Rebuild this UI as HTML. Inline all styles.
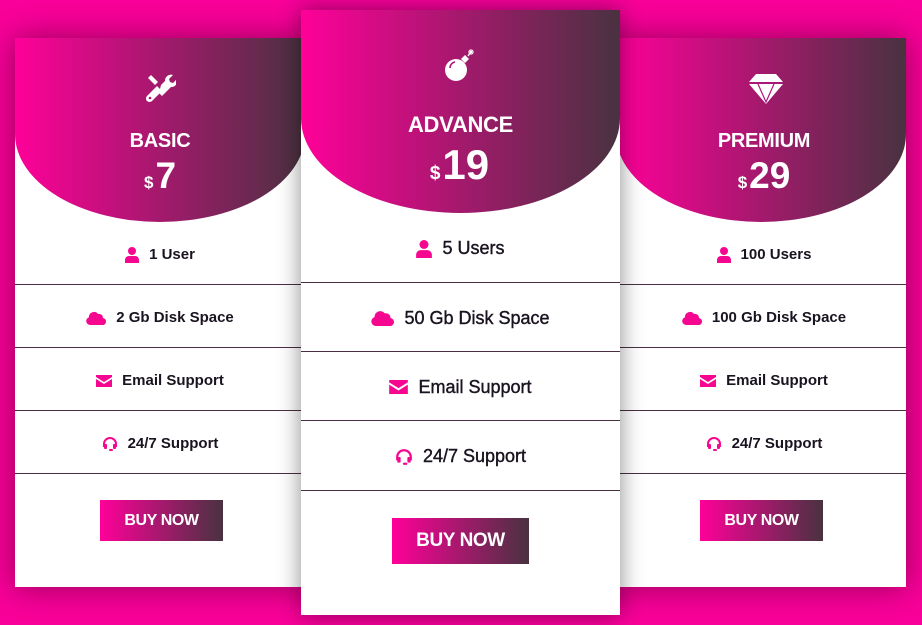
<!DOCTYPE html>
<html><head><style>
*{margin:0;padding:0;box-sizing:border-box}
body{width:922px;height:625px;background:#f9009a;position:relative;overflow:hidden;font-family:"Liberation Sans",sans-serif}
.card{position:absolute;background:#fff;box-shadow:0 0 30px rgba(80,0,40,.6)}
.hd{position:absolute;left:0;top:0;width:100%;background:linear-gradient(90deg,#ff0099,#493240);color:#fff;text-align:center}
.ttl{position:absolute;width:100%;font-weight:bold;letter-spacing:-.3px}
.pr{position:absolute;width:100%;font-weight:bold}
.pr small{font-size:17px;margin-right:2px}
.ico{position:absolute;left:50%}
.row{position:absolute;left:0;width:100%;border-bottom:1px solid #4a2f40;display:flex;align-items:center;justify-content:center;color:#1a1320;font-weight:bold}
.row svg{margin-right:10px;fill:#f5078f}
.btn{position:absolute;background:linear-gradient(90deg,#ff0099,#493240);color:#fff;font-weight:bold;display:flex;align-items:center;justify-content:center;letter-spacing:-.4px}
</style></head><body>

<!-- BASIC -->
<div class="card" style="left:15px;top:38px;width:290px;height:549px">
 <div class="hd" style="height:184px;border-radius:0 0 50% 50%/0 0 88px 88px">
  <svg class="ico" style="margin-left:-16px;top:34px" width="32" height="32" viewBox="0 0 32 32" fill="#fff"><path d="M4 6l3-3 7 7-3 3z"/><path d="M13 14l5 5-10 10a3 3 0 0 1-5-5z"/><path d="M17 13l4-4a6 6 0 0 1 8-6l-4 4 1 3 3 1 4-4a6 6 0 0 1-6 8l-9 9-3-3z"/><circle cx="6" cy="26" r="1.3" fill="#b01580"/></svg>
  <div class="ttl" style="top:92px;font-size:20px">BASIC</div>
  <div class="pr" style="top:117px;font-size:37px"><small>$</small>7</div>
 </div>
 <div class="row" style="top:184px;height:63px;padding-top:3px;font-size:15px"><svg width="14" height="16" viewBox="0 0 14 16"><circle cx="7" cy="4" r="4"/><path d="M0 16v-3a4 4 0 0 1 4-4h6a4 4 0 0 1 4 4v3z"/></svg>1 User</div>
 <div class="row" style="top:247px;height:63px;padding-top:3px;font-size:15px"><svg width="20" height="14" viewBox="0 0 20 14"><path d="M4 14a4 4 0 0 1-1-7.8A5 5 0 0 1 12 3a4 4 0 0 1 5 4 3.5 3.5 0 0 1-1 7z"/></svg>2 Gb Disk Space</div>
 <div class="row" style="top:310px;height:63px;padding-top:3px;font-size:15px"><svg width="16" height="12" viewBox="0 0 16 12"><path d="M0 0h16v2l-8 5-8-5z"/><path d="M0 4l8 5 8-5v8H0z"/></svg>Email Support</div>
 <div class="row" style="top:373px;height:63px;padding-top:3px;font-size:15px"><svg width="16" height="16" viewBox="0 0 16 16"><path d="M8 1a7 7 0 0 0-7 7v3h2V8a5 5 0 0 1 10 0v3h2V8a7 7 0 0 0-7-7z"/><rect x="2" y="8" width="3" height="5" rx="1"/><rect x="11" y="8" width="3" height="5" rx="1"/><rect x="7" y="13" width="4" height="2" rx="1"/></svg>24/7 Support</div>
 <div class="btn" style="left:85px;top:462px;width:123px;height:41px;font-size:16px">BUY NOW</div>
</div>

<!-- PREMIUM -->
<div class="card" style="left:616px;top:38px;width:290px;height:549px">
 <div class="hd" style="height:184px;border-radius:0 0 50% 50%/0 0 88px 88px">
  <svg class="ico" style="margin-left:-13px;top:34px" width="36" height="32" viewBox="0 0 36 32" fill="#fff"><path d="M8 2h20l7 8H1z"/><path d="M1 12h34L18 32z"/><path d="M10 12l8 18 8-18" fill="none" stroke="#b01580" stroke-width="1.2"/><path d="M1 11h34" stroke="#b01580" stroke-width="1.2"/></svg>
  <div class="ttl" style="top:92px;font-size:20px;padding-left:6px">PREMIUM</div>
  <div class="pr" style="top:117px;font-size:37px;padding-left:6px"><small>$</small>29</div>
 </div>
 <div class="row" style="top:184px;height:63px;padding-top:3px;font-size:15px;padding-left:6px"><svg width="14" height="16" viewBox="0 0 14 16"><circle cx="7" cy="4" r="4"/><path d="M0 16v-3a4 4 0 0 1 4-4h6a4 4 0 0 1 4 4v3z"/></svg>100 Users</div>
 <div class="row" style="top:247px;height:63px;padding-top:3px;font-size:15px;padding-left:6px"><svg width="20" height="14" viewBox="0 0 20 14"><path d="M4 14a4 4 0 0 1-1-7.8A5 5 0 0 1 12 3a4 4 0 0 1 5 4 3.5 3.5 0 0 1-1 7z"/></svg>100 Gb Disk Space</div>
 <div class="row" style="top:310px;height:63px;padding-top:3px;font-size:15px;padding-left:6px"><svg width="16" height="12" viewBox="0 0 16 12"><path d="M0 0h16v2l-8 5-8-5z"/><path d="M0 4l8 5 8-5v8H0z"/></svg>Email Support</div>
 <div class="row" style="top:373px;height:63px;padding-top:3px;font-size:15px;padding-left:6px"><svg width="16" height="16" viewBox="0 0 16 16"><path d="M8 1a7 7 0 0 0-7 7v3h2V8a5 5 0 0 1 10 0v3h2V8a7 7 0 0 0-7-7z"/><rect x="2" y="8" width="3" height="5" rx="1"/><rect x="11" y="8" width="3" height="5" rx="1"/><rect x="7" y="13" width="4" height="2" rx="1"/></svg>24/7 Support</div>
 <div class="btn" style="left:84px;top:462px;width:123px;height:41px;font-size:16px">BUY NOW</div>
</div>

<!-- ADVANCE -->
<div class="card" style="left:301px;top:10px;width:319px;height:605px;box-shadow:0 0 22px rgba(0,0,0,.45)">
 <div class="hd" style="height:203px;border-radius:0 0 50% 50%/0 0 95px 95px">
  <svg class="ico" style="margin-left:-17px;top:38px" width="36" height="36" viewBox="0 0 36 36" fill="#fff"><circle cx="12" cy="22" r="11"/><path d="M17 11l4-4 4 4-4 4z"/><path d="M24 8l2-3" stroke="#fff" stroke-width="1.5"/><path d="M27 1v6M24 4h6M25 2l4 4M29 2l-4 4" stroke="#fff" stroke-width="1"/><path d="M6 20a6 6 0 0 1 5-6" fill="none" stroke="#b01580" stroke-width="1.6"/></svg>
  <div class="ttl" style="top:102px;font-size:22px">ADVANCE</div>
  <div class="pr" style="top:131px;font-size:42px;padding-right:2px"><small style="font-size:19px">$</small>19</div>
 </div>
 <div class="row" style="top:203px;height:70px;padding-top:2px;font-size:18px;font-weight:normal;-webkit-text-stroke:.4px #1a1320"><svg width="16" height="18" viewBox="0 0 14 16"><circle cx="7" cy="4" r="4"/><path d="M0 16v-3a4 4 0 0 1 4-4h6a4 4 0 0 1 4 4v3z"/></svg>5 Users</div>
 <div class="row" style="top:273px;height:69px;padding-top:2px;font-size:18px;font-weight:normal;-webkit-text-stroke:.4px #1a1320"><svg width="23" height="16" viewBox="0 0 20 14"><path d="M4 14a4 4 0 0 1-1-7.8A5 5 0 0 1 12 3a4 4 0 0 1 5 4 3.5 3.5 0 0 1-1 7z"/></svg>50 Gb Disk Space</div>
 <div class="row" style="top:342px;height:69px;padding-top:2px;font-size:18px;font-weight:normal;-webkit-text-stroke:.4px #1a1320"><svg width="19" height="14" viewBox="0 0 16 12"><path d="M0 0h16v2l-8 5-8-5z"/><path d="M0 4l8 5 8-5v8H0z"/></svg>Email Support</div>
 <div class="row" style="top:411px;height:70px;padding-top:2px;font-size:18px;font-weight:normal;-webkit-text-stroke:.4px #1a1320"><svg width="18" height="18" viewBox="0 0 16 16"><path d="M8 1a7 7 0 0 0-7 7v3h2V8a5 5 0 0 1 10 0v3h2V8a7 7 0 0 0-7-7z"/><rect x="2" y="8" width="3" height="5" rx="1"/><rect x="11" y="8" width="3" height="5" rx="1"/><rect x="7" y="13" width="4" height="2" rx="1"/></svg>24/7 Support</div>
 <div class="btn" style="left:91px;top:508px;width:137px;height:46px;font-size:19px">BUY NOW</div>
</div>
</body></html>
